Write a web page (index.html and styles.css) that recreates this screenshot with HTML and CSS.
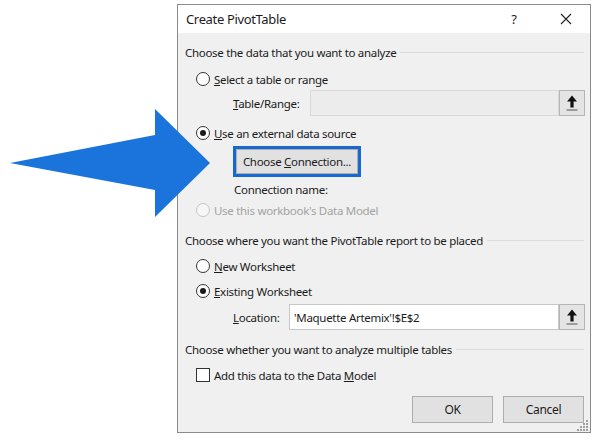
FILE: index.html
```html
<!DOCTYPE html>
<html>
<head>
<meta charset="utf-8">
<link rel="stylesheet" href="styles.css">
</head>
<body>
<div class="page">
  <div class="dialog">
    <div class="titlebar">
      <span class="title">Create PivotTable</span>
      <span class="help">?</span>
      <span class="close">
        <svg width="12" height="12" viewBox="0 0 12 12"><path d="M1 1 L11 11 M11 1 L1 11" stroke="#222" stroke-width="1.1" fill="none"/></svg>
      </span>
    </div>
    <div class="body">
      <div class="group-head g1"><span>Choose the data that you want to analyze</span><span class="rule"></span></div>

      <div class="opt r1"><span class="radio"></span><span><u>S</u>elect a table or range</span></div>

      <div class="field f1">
        <span class="label l-table"><span><u>T</u>able/Range:</span></span>
        <span class="input disabled"></span>
        <span class="picker"><svg width="14" height="18" viewBox="0 0 14 18"><path d="M7 1.5 L2 7.5 L5.4 7.5 L5.4 13.5 L8.6 13.5 L8.6 7.5 L12 7.5 Z" fill="#111"/><rect x="1.5" y="15.5" width="11" height="1" fill="#555"/></svg></span>
      </div>

      <div class="opt r2"><span class="radio checked"></span><span><u>U</u>se an external data source</span></div>

      <div class="connrow">
        <span class="focusring"><span class="btn conn"><span>Choose <u>C</u>onnection...</span></span></span>
      </div>

      <div class="connname">Connection name:</div>

      <div class="opt r3 dis"><span class="radio disabled"></span><span>Use this workbook's Data Model</span></div>

      <div class="group-head g2"><span>Choose where you want the PivotTable report to be placed</span><span class="rule"></span></div>

      <div class="opt r4"><span class="radio"></span><span><u>N</u>ew Worksheet</span></div>
      <div class="opt r5"><span class="radio checked"></span><span><u>E</u>xisting Worksheet</span></div>

      <div class="field f2">
        <span class="label l-loc"><span><u>L</u>ocation:</span></span>
        <span class="input">'Maquette Artemix'!$E$2</span>
        <span class="picker"><svg width="14" height="18" viewBox="0 0 14 18"><path d="M7 1.5 L2 7.5 L5.4 7.5 L5.4 13.5 L8.6 13.5 L8.6 7.5 L12 7.5 Z" fill="#111"/><rect x="1.5" y="15.5" width="11" height="1" fill="#555"/></svg></span>
      </div>

      <div class="group-head g3"><span>Choose whether you want to analyze multiple tables</span><span class="rule"></span></div>

      <div class="opt r6"><span class="checkbox"></span><span>Add this data to the Data <u>M</u>odel</span></div>

      <div class="actions">
        <span class="btn action">OK</span>
        <span class="btn action">Cancel</span>
      </div>
    </div>
    <svg class="grip" width="12" height="12" viewBox="0 0 12 12">
      <g fill="#a0a0a0">
        <rect x="9" y="1" width="2" height="2"/>
        <rect x="6" y="4" width="2" height="2"/><rect x="9" y="4" width="2" height="2"/>
        <rect x="3" y="7" width="2" height="2"/><rect x="6" y="7" width="2" height="2"/><rect x="9" y="7" width="2" height="2"/>
        <rect x="0" y="10" width="2" height="2"/><rect x="3" y="10" width="2" height="2"/><rect x="6" y="10" width="2" height="2"/><rect x="9" y="10" width="2" height="2"/>
      </g>
    </svg>
  </div>
  <svg class="arrow" width="220" height="230" viewBox="0 0 220 230">
    <polygon points="10,163 155,135 155,109 210,163 155,217 155,190" fill="#1a74db"/>
  </svg>
</div>
</body>
</html>
```

FILE: styles.css
```css
html, body {
  margin: 0;
  padding: 0;
  background: #ffffff;
}

.page {
  position: relative;
  width: 602px;
  height: 444px;
  overflow: hidden;
  font-family: "Noto Sans", "Open Sans", sans-serif;
  font-size: 11.5px;
  letter-spacing: -0.3px;
  color: #1b1b1b;
}

.dialog {
  position: relative;
  margin-left: 177px;
  margin-top: 4px;
  width: 412px;
  height: 427px;
  border: 1px solid #8a8a8a;
  background: #f0f0f0;
  display: flex;
  flex-direction: column;
}

.titlebar {
  height: 28px;
  background: #ffffff;
  display: flex;
  align-items: center;
  padding-left: 8px;
}

.title {
  font-size: 13px;
  letter-spacing: -0.35px;
  flex: 1;
}

.help {
  width: 14px;
  text-align: center;
  font-size: 13px;
  margin-right: 39px;
}

.close {
  width: 12px;
  height: 12px;
  margin-right: 18px;
  display: flex;
}

.body {
  flex: 1;
  display: flex;
  flex-direction: column;
  padding: 9px 5px 0 7px;
}

.group-head {
  height: 20px;
  display: flex;
  align-items: center;
  gap: 4px;
  padding-right: 1px;
}

.group-head .rule {
  flex: 1;
  height: 1px;
  background: #dcdcdc;
}

.opt {
  height: 20px;
  display: flex;
  align-items: center;
  padding-left: 11px;
  gap: 4px;
}

.opt.dis {
  color: #a2a2a2;
}

.radio {
  width: 14px;
  height: 14px;
  border: 1px solid #333333;
  border-radius: 50%;
  background: #ffffff;
  box-sizing: border-box;
  position: relative;
  flex: none;
}

.radio.checked::after {
  content: "";
  position: absolute;
  left: 3px;
  top: 3px;
  width: 6px;
  height: 6px;
  border-radius: 50%;
  background: #1b1b1b;
}

.radio.disabled {
  border-color: #c4c4c4;
  background: #f7f7f7;
}

.checkbox {
  width: 14px;
  height: 14px;
  border: 1px solid #333333;
  background: #ffffff;
  box-sizing: border-box;
  flex: none;
}

.field {
  height: 26px;
  display: flex;
  align-items: stretch;
}

.label {
  display: flex;
  align-items: center;
  padding-left: 48px;
  flex: none;
}

.l-table { width: 77px; }
.l-loc { width: 56px; }

.input {
  flex: 1;
  border: 1px solid #c8c8c8;
  background: #ffffff;
  display: flex;
  align-items: center;
  padding-left: 4px;
}

.input.disabled {
  background: #ececec;
  border-color: #dadada;
}

.picker {
  width: 24px;
  border: 1px solid #b5b5b5;
  background: #e4e4e4;
  display: flex;
  align-items: center;
  justify-content: center;
  flex: none;
}

.f1 { margin-top: 1px; }
.r1 { margin-top: 7px; }
.r2 { margin-top: 7px; }

.connrow {
  margin-top: 3px;
  padding-left: 48px;
  display: flex;
}

.focusring {
  border: 3px solid #1769d1;
  display: flex;
}

.btn {
  background: #e1e1e1;
  border: 1px solid #adadad;
  display: flex;
  align-items: center;
  justify-content: center;
}

.conn {
  width: 120px;
  height: 23px;
}

.connname {
  margin-top: 3px;
  height: 18px;
  display: flex;
  align-items: center;
  padding-left: 49px;
}

.r3 { margin-top: 2px; }
.g2 { margin-top: 10px; }
.r4 { margin-top: 6px; }
.r5 { margin-top: 5px; }
.f2 { margin-top: 3px; }
.g3 { margin-top: 9px; }
.r6 { margin-top: 6px; }

.actions {
  margin-top: 11px;
  display: flex;
  justify-content: flex-end;
  gap: 10px;
  padding-right: 1px;
}

.action {
  width: 79px;
  height: 25px;
  font-size: 12px;
}

.grip {
  position: absolute;
  right: 1px;
  bottom: 1px;
}

.arrow {
  position: absolute;
  left: 0;
  top: 0;
}
```
